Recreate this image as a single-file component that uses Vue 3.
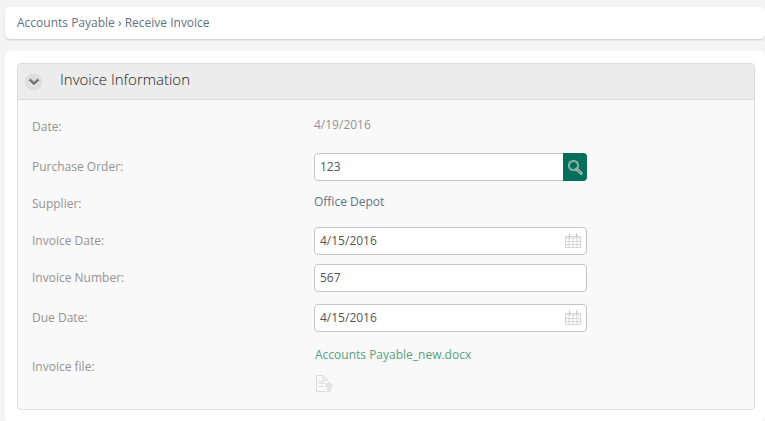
<script setup>
import { ref } from 'vue'

const open = ref(true)
const order = ref('123')
const invoiceDate = ref('4/15/2016')
const invoiceNumber = ref('567')
const dueDate = ref('4/15/2016')
</script>

<template>
  <div class="page">
    <nav class="breadcrumb" aria-label="Breadcrumb">
      <a href="#">Accounts Payable</a> › <a href="#">Receive Invoice</a>
    </nav>
    <main class="card">
      <section class="panel">
        <header class="panel-head">
          <button class="toggle" type="button" aria-label="Toggle section" @click="open = !open">
            <svg width="18" height="18" viewBox="0 0 18 18">
              <circle cx="8.500" cy="9" r="8.500" fill="#dedede" />
              <path d="M4.500 8L9 12.300L13.500 8" fill="none" stroke="#fff" stroke-width="2" />
              <path d="M4.500 6.500L9 10.800L13.500 6.500" fill="none" stroke="#777" stroke-width="2.600" />
            </svg>
          </button>
          <h1>Invoice Information</h1>
        </header>
        <form v-show="open" class="rows" @submit.prevent>
          <div class="row">
            <span class="label">Date:</span>
            <span class="value">4/19/2016</span>
          </div>
          <div class="row">
            <label class="label" for="order">Purchase Order:</label>
            <div class="field">
              <input id="order" v-model="order" type="text" />
              <button class="search" type="button" aria-label="Search">
                <svg width="15" height="15" viewBox="0 0 15 15" fill="none">
                  <path d="M8.500 9L13 13.200" stroke="#c9d3cd" stroke-width="3" stroke-linecap="round" />
                  <path d="M8.500 9L13 13.200" stroke="#697d75" stroke-width="1.200" />
                  <circle cx="5.500" cy="5.500" r="4.500" stroke="#b4cbc2" stroke-width="2" />
                  <circle cx="5.500" cy="5.500" r="4.500" stroke="#5f8479" stroke-width=".8" />
                </svg>
              </button>
            </div>
          </div>
          <div class="row short">
            <span class="label">Supplier:</span>
            <a class="value supplier" href="#">Office Depot</a>
          </div>
          <div class="row">
            <label class="label" for="invoice-date">Invoice Date:</label>
            <div class="field">
              <input id="invoice-date" v-model="invoiceDate" type="text" />
              <button class="calendar" type="button" aria-label="Pick invoice date">
                <svg width="16" height="16" viewBox="0 0 16 16" fill="none" stroke="#d6d6d6">
                  <path d="M.5 3.500H15.500V14.500H.5ZM.5 5H15.500M.5 8.500H15.500M.5 11.500H15.500M4 5V14.500M8 5V14.500M12 5V14.500" />
                  <path d="M4.500 .5V4.500M11.500 .5V4.500" stroke="#bdbdbd" />
                </svg>
              </button>
            </div>
          </div>
          <div class="row short">
            <label class="label" for="invoice-number">Invoice Number:</label>
            <div class="field"><input id="invoice-number" v-model="invoiceNumber" type="text" /></div>
          </div>
          <div class="row tall">
            <label class="label" for="due-date">Due Date:</label>
            <div class="field">
              <input id="due-date" v-model="dueDate" type="text" />
              <button class="calendar" type="button" aria-label="Pick due date">
                <svg width="16" height="16" viewBox="0 0 16 16" fill="none" stroke="#d6d6d6">
                  <path d="M.5 3.500H15.500V14.500H.5ZM.5 5H15.500M.5 8.500H15.500M.5 11.500H15.500M4 5V14.500M8 5V14.500M12 5V14.500" />
                  <path d="M4.500 .5V4.500M11.500 .5V4.500" stroke="#bdbdbd" />
                </svg>
              </button>
            </div>
          </div>
          <div class="row">
            <span class="label">Invoice file:</span>
            <div class="files">
              <a href="#">Accounts Payable_new.docx</a>
              <button class="upload" type="button" aria-label="Upload file">
                <svg width="19" height="18" viewBox="0 0 19 18" fill="none" stroke="#dcdcdc">
                  <path d="M11 16.500H1.500V.5H8L12.500 5V6M8 .5V5H12.500M4 6.500H9.500M4 8.500H10.500M4 11.500H8.500" />
                  <path d="M14 7L18.500 12H16V17H12V12H9.500Z" fill="#e4e4e4" stroke="none" />
                  <path d="M9.500 11.500L14 7L18.500 11.500" />
                </svg>
              </button>
            </div>
          </div>
        </form>
      </section>
    </main>
  </div>
</template>

<style>
body {
  margin: 0;
  background: #f4f4f4;
}
</style>

<style scoped>
.page {
  box-sizing: border-box;
  min-height: 100vh;
  padding: 7px 0 0 5px;
  display: flex;
  flex-direction: column;
  gap: 12px;
  font: 12px/18px "Open Sans", sans-serif;
  color: #939393;
}
a {
  color: inherit;
  text-decoration: none;
}
button {
  display: flex;
  align-items: center;
  justify-content: center;
  padding: 0;
  border: 0;
  background: none;
  cursor: pointer;
}
.breadcrumb {
  padding: 7px 12px;
  border-radius: 5px;
  background: #fff;
  box-shadow: 0 1px 2px #ccc;
  color: #637282;
}
.card {
  flex: 1;
  padding: 12px 10px 12px 12px;
  border-radius: 6px;
  background: #fff;
}
.panel {
  border: 1px solid #ddd;
  border-radius: 4px;
  background: #f9f9f9;
  overflow: hidden;
}
.panel-head {
  display: flex;
  align-items: center;
  gap: 17px;
  height: 35px;
  padding-left: 7px;
  border-bottom: 1px solid #d9d9d9;
  background: #ececec;
}
.toggle {
  width: 18px;
  height: 18px;
}
h1 {
  margin: 0;
  padding-bottom: 6px;
  font-size: 15px;
  line-height: 20px;
  font-weight: 340;
  color: #222;
}
.rows {
  padding: 7px 14px 16px;
}
.row {
  display: flex;
  align-items: center;
  min-height: 40px;
}
.short {
  min-height: 34px;
}
.tall {
  min-height: 46px;
}
.label {
  flex: 0 0 282px;
}
.value {
  padding-bottom: 4px;
}
.supplier {
  color: #637282;
}
.field {
  position: relative;
  display: flex;
  flex: 0 1 273px;
}
input {
  box-sizing: border-box;
  width: 100%;
  height: 28px;
  padding: 0 28px 2px 5px;
  border: 1px solid #c6c6c6;
  border-radius: 4px;
  background: #fff;
  font: inherit;
  color: #555;
}
.search {
  position: absolute;
  top: 0;
  right: 0;
  width: 24px;
  height: 28px;
  border-radius: 0 4px 4px 0;
  background: #00705c;
}
.calendar {
  position: absolute;
  top: 6px;
  right: 6px;
}
.files {
  display: flex;
  flex-direction: column;
  align-items: flex-start;
  gap: 11px;
  padding: 5px 1px 0;
  color: #55a083;
}
</style>
